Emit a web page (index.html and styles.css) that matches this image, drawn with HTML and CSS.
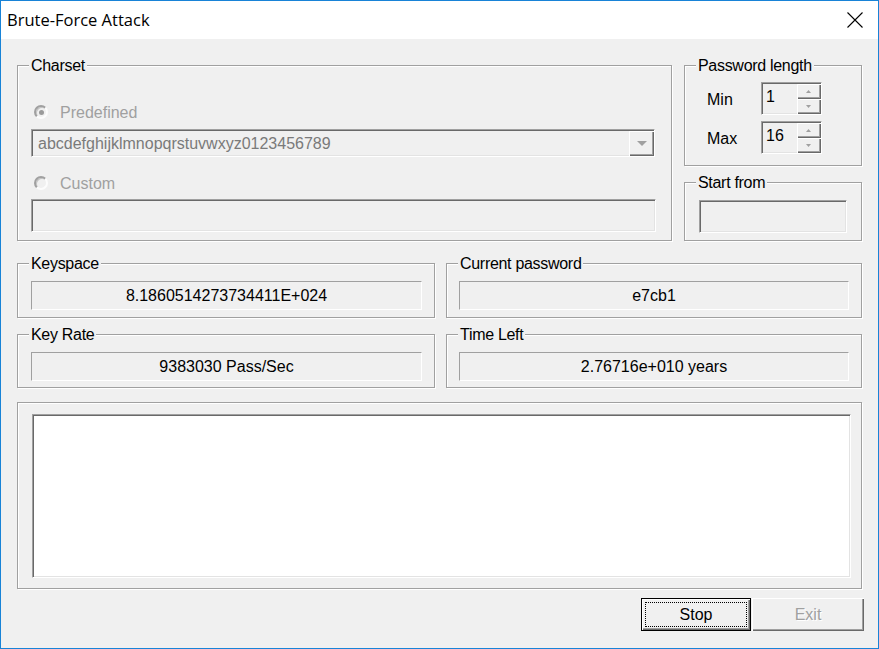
FILE: index.html
```html
<!DOCTYPE html>
<html lang="en">
<head>
<meta charset="utf-8">
<title>Brute-Force Attack</title>
<link rel="stylesheet" href="styles.css">
</head>
<body>
<div class="window">
  <div class="titlebar">
    <span class="title">Brute-Force Attack</span>
    <svg class="close" viewBox="0 0 16 16" width="16" height="16"><path d="M0.5 0.5 L15.5 15.5 M15.5 0.5 L0.5 15.5" stroke="#000" stroke-width="1.1" fill="none"/></svg>
  </div>
  <div class="client">
    <div class="top-row">
      <div class="group charset">
        <span class="glabel">Charset</span>
        <div class="radio-row first"><span class="radio checked"></span><span class="dis">Predefined</span></div>
        <div class="combo">
          <span class="combo-text">abcdefghijklmnopqrstuvwxyz0123456789</span>
          <span class="drop"><svg width="10" height="5" viewBox="0 0 10 5"><path d="M0 0 H10 L5 5 Z" fill="#a0a0a0"/></svg></span>
        </div>
        <div class="radio-row second"><span class="radio"></span><span class="dis">Custom</span></div>
        <div class="edit custom-edit"></div>
      </div>
      <div class="right-col">
        <div class="group pwlen">
          <span class="glabel">Password length</span>
          <div class="spin-row">
            <span class="spin-label">Min</span>
            <div class="spin">
              <span class="spin-val">1</span>
              <span class="spin-btns">
                <span class="sbtn"><svg width="5" height="3" viewBox="0 0 5 3"><path d="M0 3 H5 L2.5 0 Z" fill="#a0a0a0"/></svg></span>
                <span class="sbtn"><svg width="5" height="3" viewBox="0 0 5 3"><path d="M0 0 H5 L2.5 3 Z" fill="#a0a0a0"/></svg></span>
              </span>
            </div>
          </div>
          <div class="spin-row">
            <span class="spin-label">Max</span>
            <div class="spin">
              <span class="spin-val">16</span>
              <span class="spin-btns">
                <span class="sbtn"><svg width="5" height="3" viewBox="0 0 5 3"><path d="M0 3 H5 L2.5 0 Z" fill="#a0a0a0"/></svg></span>
                <span class="sbtn"><svg width="5" height="3" viewBox="0 0 5 3"><path d="M0 0 H5 L2.5 3 Z" fill="#a0a0a0"/></svg></span>
              </span>
            </div>
          </div>
        </div>
        <div class="group startfrom">
          <span class="glabel">Start from</span>
          <div class="edit start-edit"></div>
        </div>
      </div>
    </div>

    <div class="stats">
      <div class="group stat">
        <span class="glabel">Keyspace</span>
        <div class="field">8.1860514273734411E+024</div>
      </div>
      <div class="group stat right">
        <span class="glabel">Current password</span>
        <div class="field">e7cb1</div>
      </div>
      <div class="group stat">
        <span class="glabel">Key Rate</span>
        <div class="field">9383030 Pass/Sec</div>
      </div>
      <div class="group stat right">
        <span class="glabel">Time Left</span>
        <div class="field">2.76716e+010 years</div>
      </div>
    </div>

    <div class="group log">
      <div class="logbox"></div>
    </div>

    <div class="buttons">
      <div class="btn default"><span class="focus">Stop</span></div>
      <div class="btn disabled"><span class="btn-text">Exit</span></div>
    </div>
  </div>
</div>
</body>
</html>
```
FILE: styles.css
```css
* { box-sizing: border-box; }
html, body { margin: 0; padding: 0; }
body {
  width: 879px;
  height: 649px;
  overflow: hidden;
  background: #f0f0f0;
  font-family: "Liberation Sans", Arial, sans-serif;
  font-size: 16px;
  color: #000;
}
.window {
  width: 879px;
  height: 649px;
  border: 1px solid #1883d7;
  display: flex;
  flex-direction: column;
}
.titlebar {
  height: 38px;
  flex: none;
  background: #fff;
  display: flex;
  align-items: center;
  justify-content: space-between;
  padding-left: 6px;
}
.title {
  font-family: "Open Sans", "Noto Sans", sans-serif;
  font-size: 16.5px;
  line-height: 38px;
}
.close { margin-right: 15px; margin-top: -1px; }
.client {
  flex: 1;
  background: #f0f0f0;
  padding: 26px 0 0 16px;
}

/* group boxes */
.group {
  position: relative;
  border: 1px solid #a0a0a0;
  box-shadow: inset 1px 1px 0 #fff, 1px 1px 0 #fff;
}
.glabel {
  position: absolute;
  top: -9px;
  left: 11px;
  padding: 0 2px;
  background: #f0f0f0;
  line-height: 18px;
  white-space: nowrap;
  letter-spacing: -0.3px;
}

.top-row { display: flex; gap: 12px; width: 845px; }
.charset {
  width: 655px;
  height: 176px;
  padding-left: 13px;
  display: flex;
  flex-direction: column;
}
.radio-row {
  height: 20px;
  display: flex;
  align-items: center;
}
.radio-row.first { margin-top: 37px; }
.radio-row.second { margin-top: 17px; }
.radio {
  width: 14px;
  height: 14px;
  flex: none;
  border-radius: 50%;
  border: 2px solid;
  border-color: #a0a0a0 #fcfcfc #fcfcfc #a0a0a0;
  box-shadow: inset 1px 1px 0 #c4c4c4;
  background: #f0f0f0;
  margin-left: 3px;
  margin-right: 12px;
  margin-top: -2px;
  display: flex;
  align-items: center;
  justify-content: center;
}
.radio.checked::after {
  content: "";
  width: 5px;
  height: 5px;
  border-radius: 50%;
  background: #9a9a9a;
}
.dis { color: #a0a0a0; }

.edit, .combo, .spin, .logbox {
  border: 1px solid;
  border-color: #a0a0a0 #fff #fff #a0a0a0;
  box-shadow: inset 1px 1px 0 #696969, inset -1px -1px 0 #e3e3e3;
  background: #f0f0f0;
}
.combo {
  width: 624px;
  height: 28px;
  margin-top: 6px;
  display: flex;
  align-items: stretch;
}
.combo-text {
  flex: 1;
  padding-left: 6px;
  color: #7a7a7a;
  line-height: 28px;
  white-space: nowrap;
}
.drop {
  width: 25px;
  margin: 1px 0 0 0;
  background: #f0f0f0;
  box-shadow: inset 1px 1px 0 #fff, inset -1px -1px 0 #696969, inset -2px -2px 0 #a0a0a0;
  display: flex;
  align-items: center;
  justify-content: center;
  padding-bottom: 1px;
}
.custom-edit { width: 625px; height: 33px; margin-top: 5px; }

.right-col { width: 178px; display: flex; flex-direction: column; gap: 16px; }
.pwlen {
  height: 101px;
  padding: 16px 0 0 22px;
  display: flex;
  flex-direction: column;
  gap: 6px;
}
.spin-row { display: flex; align-items: center; height: 33px; }
.spin-label { width: 54px; padding-top: 3px; }
.spin { width: 61px; height: 33px; display: flex; }
.spin-val { flex: 1; padding: 4px 0 0 4px; line-height: 20px; }
.spin-btns {
  width: 24px;
  display: flex;
  flex-direction: column;
  padding-top: 1px;
}
.sbtn {
  flex: 1;
  background: #f0f0f0;
  box-shadow: inset 1px 1px 0 #fff, inset -1px -1px 0 #696969, inset -2px -2px 0 #a0a0a0;
  display: flex;
  align-items: center;
  justify-content: center;
  padding-right: 1px;
}
.startfrom { height: 59px; padding: 17px 0 0 14px; }
.start-edit { width: 148px; height: 33px; }

/* stats */
.stats {
  margin-top: 22px;
  width: 845px;
  display: grid;
  grid-template-columns: 418px 416px;
  grid-template-rows: 55px 54px;
  column-gap: 11px;
  row-gap: 16px;
}
.stat { padding: 17px 12px 0 13px; }
.stat.right { padding-left: 12px; }
.field {
  height: 29px;
  border: 1px solid;
  border-color: #a0a0a0 #fff #fff #a0a0a0;
  display: flex;
  align-items: center;
  justify-content: center;
  white-space: nowrap;
}

/* log */
.log {
  margin-top: 14px;
  width: 845px;
  height: 187px;
  padding: 11px 0 0 14px;
}
.logbox { width: 819px; height: 164px; background: #fff; }

/* buttons */
.buttons {
  margin-top: 9px;
  width: 847px;
  display: flex;
  justify-content: flex-end;
  gap: 1px;
}
.btn {
  height: 33px;
  background: #f0f0f0;
  display: flex;
  align-items: stretch;
}
.btn.default {
  width: 110px;
  border: 1px solid #000;
  padding: 3px;
  box-shadow: inset 1px 1px 0 #fff, inset -1px -1px 0 #696969, inset -2px -2px 0 #a0a0a0;
}
.focus {
  flex: 1;
  border: 1px dotted #000;
  display: flex;
  align-items: center;
  justify-content: center;
}
.btn.disabled {
  width: 112px;
  box-shadow: inset 1px 1px 0 #fff, inset -1px -1px 0 #696969, inset -2px -2px 0 #a0a0a0;
  justify-content: center;
  align-items: center;
}
.btn-text { color: #a0a0a0; text-shadow: 1px 1px 0 #fff; }
```
